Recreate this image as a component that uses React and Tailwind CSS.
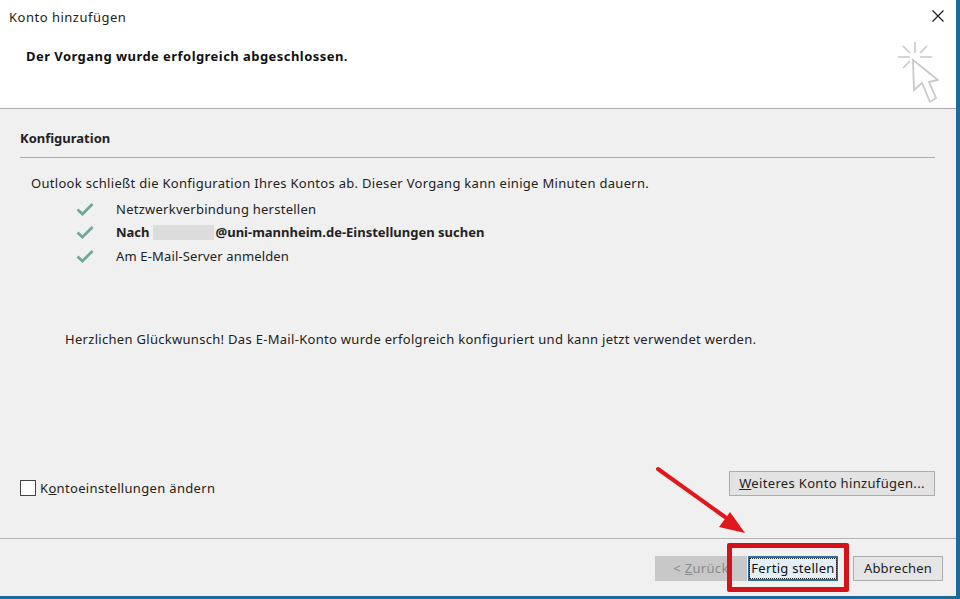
const F = "font-['Noto_Sans','Open_Sans',sans-serif]";

function Check() {
  return (
    <svg width="18" height="14" viewBox="0 0 18 14" className="block">
      <path d="M1.5 7.5 L6.5 12 L16.5 2" fill="none" stroke="#6fa89a" strokeWidth="2.8" />
    </svg>
  );
}

function Row({ children, className = "" }) {
  return (
    <div className="flex items-center h-[23.5px]">
      <div className="w-[18px] ml-[76px] mr-[22px] flex justify-center"><Check /></div>
      <div className={"text-[13px] leading-[18px] text-[#222] whitespace-nowrap flex items-center " + className}>{children}</div>
    </div>
  );
}

function Btn({ className = "", children }) {
  return (
    <div className={"h-[25px] flex items-center justify-center text-[13px] whitespace-nowrap " + className}>
      {children}
    </div>
  );
}

export default function App() {
  return (
    <div className={"relative w-[960px] h-[599px] overflow-hidden flex flex-col bg-[#f0f0f0] " + F}>
      <div className="flex-1 min-h-0 flex">
        <div className="flex-1 min-w-0 flex flex-col">
          {/* Header */}
          <div className="h-[109px] shrink-0 bg-white border-b border-[#a9a9a9] flex justify-between">
            <div className="pl-[9px] pt-[8px]">
              <div className="text-[13px] leading-[18px] text-[#222] tracking-[0.5px]">Konto hinzufügen</div>
              <div className="mt-[21px] ml-[17px] text-[13px] leading-[18px] font-bold text-[#111] tracking-[0.45px]">
                Der Vorgang wurde erfolgreich abgeschlossen.
              </div>
            </div>
            <div className="flex flex-col items-end pr-[2px] pt-[9px]">
              <svg width="14" height="14" viewBox="0 0 14 14" className="block mr-[9px]">
                <path d="M1.5 1.5 L12.5 12.5 M12.5 1.5 L1.5 12.5" stroke="#222" strokeWidth="1.3" />
              </svg>
              <svg width="42" height="62" viewBox="0 0 42 62" className="block mt-[19px] mr-[15px]">
                <g stroke="#c9c9c9" fill="none" strokeWidth="1.6">
                  <path d="M18 0 V11 M1 15 H13 M23 15 H35 M6 4 L13 11 M30 4 L23 11 M6 26 L13 19" />
                  <path d="M16 18 L17 48 L25 41 L33 60 L39 56 L32 40 L41 38 Z" strokeWidth="1.8" />
                </g>
              </svg>
            </div>
          </div>

          {/* Body */}
          <div className="flex-1 min-h-0 flex flex-col">
            <div className="pl-[20px] pr-[21px] pt-[20px]">
              <div className="text-[13px] leading-[18px] font-bold text-[#222]">Konfiguration</div>
              <div className="h-px bg-[#a9a9a9] mt-[10px]" />
            </div>
            <div className="pl-[31px] mt-[16px] text-[13px] leading-[18px] text-[#222] whitespace-nowrap tracking-[0.3px]">
              Outlook schließt die Konfiguration Ihres Kontos ab. Dieser Vorgang kann einige Minuten dauern.
            </div>
            <div className="mt-[5px]">
              <Row className="tracking-[0.25px]">Netzwerkverbindung herstellen</Row>
              <Row>
                <span className="font-bold">Nach</span>
                <span className="w-[61px] h-[15px] ml-[3px] mr-[2px] bg-[#dcdcdc]" />
                <span className="font-bold">@uni-mannheim.de-Einstellungen suchen</span>
              </Row>
              <Row className="tracking-[0.15px]">Am E-Mail-Server anmelden</Row>
            </div>
            <div className="pl-[65px] mt-[62px] text-[13px] leading-[18px] text-[#222] whitespace-nowrap tracking-[0.3px]">
              Herzlichen Glückwunsch! Das E-Mail-Konto wurde erfolgreich konfiguriert und kann jetzt verwendet werden.
            </div>
            <div className="mt-[123px] flex items-start justify-between pl-[20px] pr-[21px]">
              <div className="flex items-center mt-[8px]">
                <div className="w-[16px] h-[16px] border border-[#444] bg-white" />
                <div className="ml-[4px] text-[13px] leading-[18px] text-[#222] tracking-[0.33px]">
                  K<span className="underline">o</span>ntoeinstellungen ändern
                </div>
              </div>
              <Btn className="w-[206px] pt-[2px] bg-[#e3e3e3] border border-[#adadad] text-[#222] tracking-[0.33px]">
                <span><span className="underline">W</span>eiteres Konto hinzufügen...</span>
              </Btn>
            </div>
            <div className="h-px bg-[#b5b5b5] mt-[41px]" />
            <div className="flex-1 flex items-start justify-end pt-[17px] pr-[13px]">
              <Btn className="w-[92px] pt-[2px] bg-[#c8c8c8] text-[#8a8a8a] tracking-[0.3px]">
                <span>&lt; <span className="underline">Z</span>urück</span>
              </Btn>
              <Btn className="w-[90px] pt-[1px] ml-[1px] bg-[#e3eef6] border-2 border-[#2f6f9f] text-[#111] tracking-[0.3px]">
                <span className="border border-dotted border-[#222] px-[1px] leading-[19px]">Fertig stellen</span>
              </Btn>
              <Btn className="w-[90px] pt-[2px] ml-[15px] bg-[#e5e5e5] border border-[#adadad] text-[#222] tracking-[0.2px]">Abbrechen</Btn>
            </div>
          </div>
        </div>
        <div className="w-[4px] shrink-0 bg-[#1c6a9c]" />
      </div>
      <div className="h-[3px] shrink-0 bg-[#1c6a9c]" />

      {/* Annotation overlays */}
      <div className="absolute left-[727px] top-[543px] w-[122px] h-[49px] border-[5px] border-[#d4121a] rounded-[2px]" />
      <svg width="100" height="70" viewBox="0 0 100 70" className="absolute left-[650px] top-[465px]">
        <path d="M8 4 L75 52" stroke="#e0181c" strokeWidth="4" strokeLinecap="round" fill="none" />
        <path d="M95 68 L69 62 L80 47 Z" fill="#e0181c" />
      </svg>
    </div>
  );
}
